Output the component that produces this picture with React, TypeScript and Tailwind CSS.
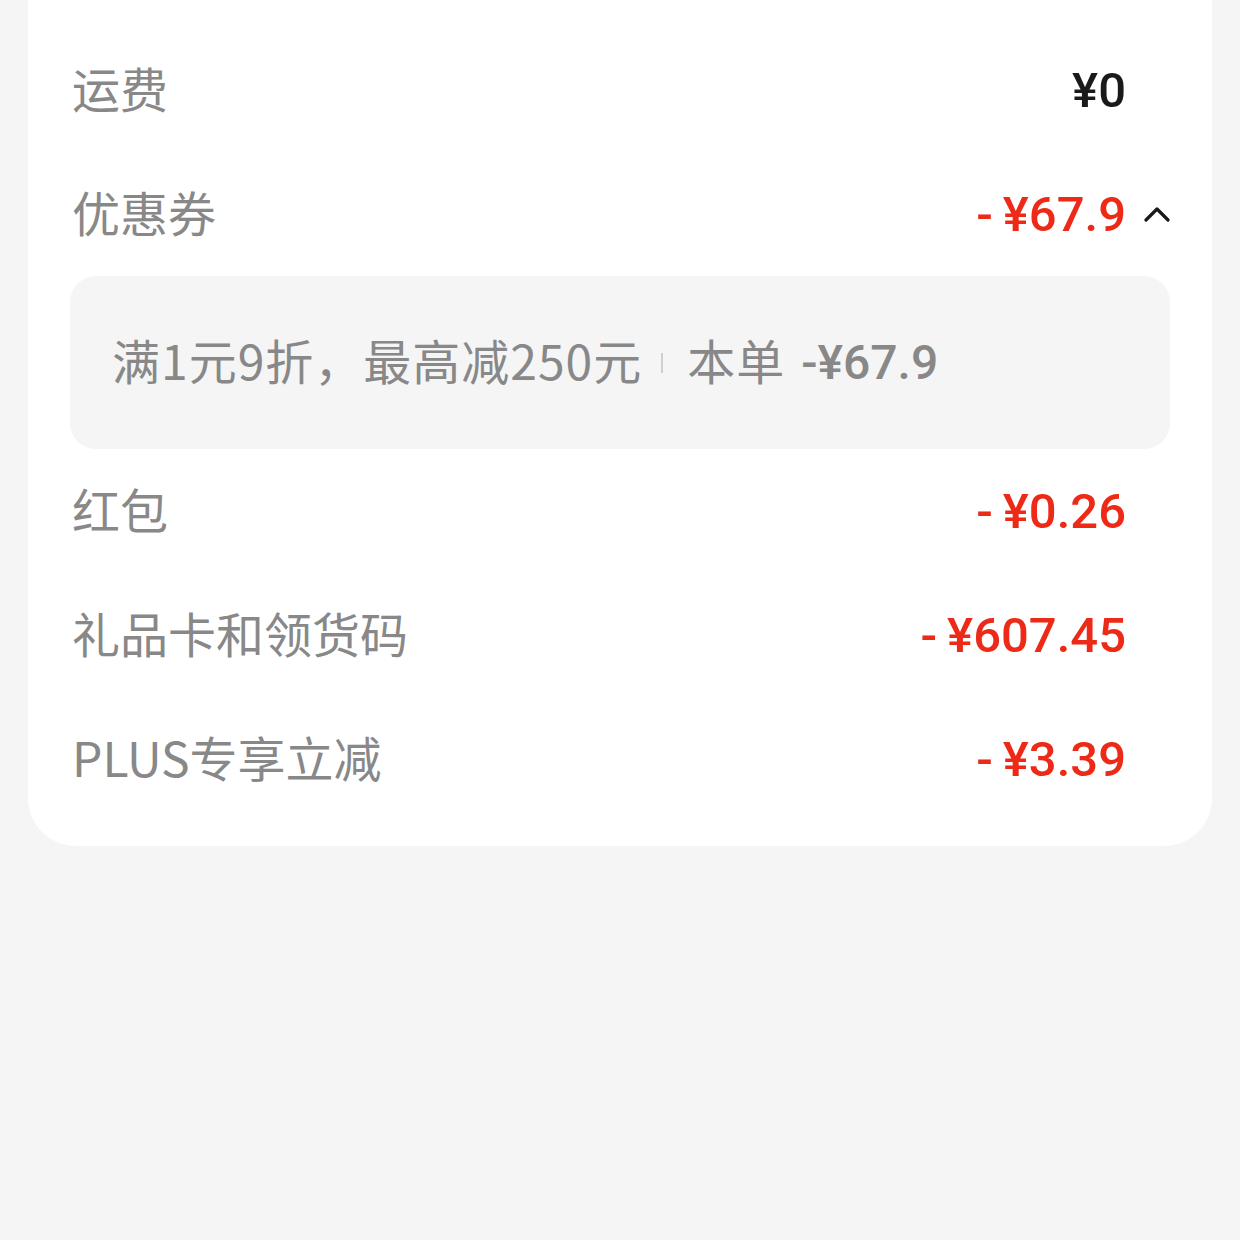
import React from "react";

const labelFont = { fontFamily: '"Noto Sans CJK SC", "Noto Sans", sans-serif' };
const numFont = { fontFamily: 'Roboto, "Noto Sans CJK SC", sans-serif' };

function Row({ label, amount, red, chevron }: { label: string; amount: string; red?: boolean; chevron?: boolean }) {
  return (
    <div className="flex h-[124px] items-center">
      <div className="-mt-[7px] flex-1 text-[48px] leading-none text-[#888888]" style={labelFont}>
        {label}
      </div>
      <div
        className={`text-[49px] font-medium leading-none ${red ? "text-[#ec2a17]" : "text-[#1a1a1a]"}`}
        style={numFont}
      >
        {red ? (
          <>
            <span className="mr-[10px]">-</span>
            {amount}
          </>
        ) : (
          amount
        )}
      </div>
      <div className="flex w-[44px] justify-end">
        {chevron && (
          <svg width="26" height="16" viewBox="0 0 26 16" fill="none">
            <path d="M2 14 L13 3 L24 14" stroke="#1a1a1a" strokeWidth="3.2" strokeLinecap="round" strokeLinejoin="round" />
          </svg>
        )}
      </div>
    </div>
  );
}

export default function App() {
  return (
    <div className="min-h-[1240px] w-[1240px] bg-[#f5f5f5]">
      <div className="mx-[28px] rounded-b-[48px] bg-white pl-[44px] pr-[42px] pt-[28px] pb-[25px]">
        <Row label="运费" amount="¥0" />
        <Row label="优惠券" amount="¥67.9" red chevron />
        <div className="-ml-[2px] flex h-[173px] items-center rounded-[26px] bg-[#f5f5f5] pl-[42px]">
          <span className="-mt-[8px] text-[48px] leading-none tracking-[1px] text-[#888888]" style={labelFont}>
            满1元9折，最高减250元
          </span>
          <span className="ml-[19px] mr-[24px] h-[20px] w-[2px] bg-[#cfcfcf]" />
          <span className="-mt-[8px] text-[48px] leading-none tracking-[1px] text-[#888888]" style={labelFont}>
            本单
          </span>
          <span className="ml-[16px] text-[48px] font-medium leading-none text-[#888888]" style={numFont}>
            -¥67.9
          </span>
        </div>
        <Row label="红包" amount="¥0.26" red />
        <Row label="礼品卡和领货码" amount="¥607.45" red />
        <Row label="PLUS专享立减" amount="¥3.39" red />
      </div>
    </div>
  );
}
